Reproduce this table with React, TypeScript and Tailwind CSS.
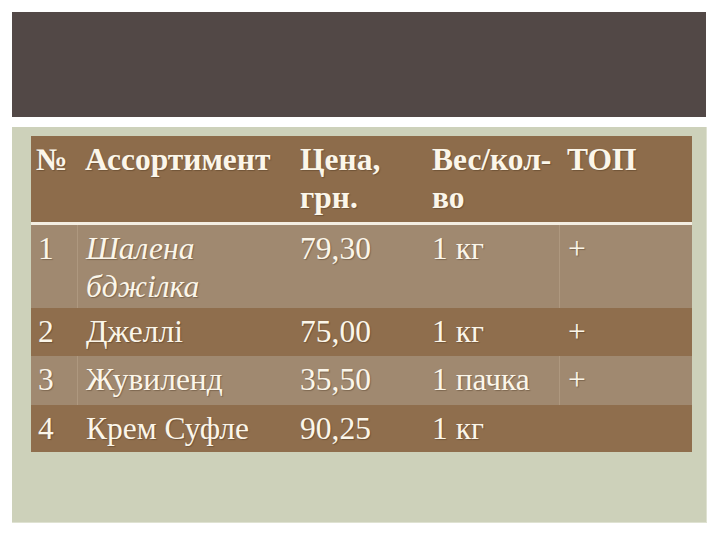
import React from "react";

type Row = { n: string; name: string[]; italic: boolean; price: string; w: string; top: string; light: boolean; h: string };

const rows: Row[] = [
  { n: "1", name: ["Шалена", "бджілка"], italic: true, price: "79,30", w: "1 кг", top: "+", light: true, h: "h-[83px]" },
  { n: "2", name: ["Джеллі"], italic: false, price: "75,00", w: "1 кг", top: "+", light: false, h: "h-[48px]" },
  { n: "3", name: ["Жувиленд"], italic: false, price: "35,50", w: "1 пачка", top: "+", light: true, h: "h-[49px]" },
  { n: "4", name: ["Крем Суфле"], italic: false, price: "90,25", w: "1 кг", top: "", light: false, h: "h-[47px]" },
];

export default function App() {
  return (
    <div className="w-[720px] h-[540px] bg-white p-[12px] flex flex-col gap-[10px] font-['Liberation_Serif',serif]">
      <div className="h-[105px] w-[694px] bg-[#524846]" />
      <div className="h-[396px] w-[695px] bg-[#cdd1ba] pt-[9px] pl-[19px] border-r border-b border-[#dfe2d2]">
        <div className="w-[661px] flex flex-col text-[31.5px] leading-[38px] text-[#fbf6ea] [text-shadow:1px_1px_1px_rgba(60,40,20,0.35)]">
          <div className="flex h-[89px] bg-[#8d6c4b] font-bold border-b-[3px] border-[#f4eee2] whitespace-nowrap">
            <div className="w-[46px] pl-[5px] pt-[5px]">№</div>
            <div className="w-[215px] pl-[8px] pt-[5px]">Ассортимент</div>
            <div className="w-[133px] pl-[8px] pt-[5px]">Цена,<br />грн.</div>
            <div className="w-[134px] pl-[7px] pt-[5px]">Вес/кол-<br />во</div>
            <div className="w-[133px] pl-[8px] pt-[5px]">ТОП</div>
          </div>
          {rows.map((r) => (
            <div key={r.n} className={`flex whitespace-nowrap ${r.h} ${r.light ? "bg-[#a08970]" : "bg-[#8f6e4d]"}`}>
              <div className="w-[46px] pl-[7px] pt-[5px]">{r.n}</div>
              <div className={`w-[215px] pl-[8px] pt-[5px] border-l ${r.light ? "border-[#ae987f]" : "border-transparent"} ${r.italic ? "italic" : ""}`}>
                {r.name.map((t) => (
                  <div key={t}>{t}</div>
                ))}
              </div>
              <div className="w-[133px] pl-[8px] pt-[5px]">{r.price}</div>
              <div className="w-[134px] pl-[7px] pt-[5px]">{r.w}</div>
              <div className={`w-[133px] pl-[8px] pt-[5px] font-light border-l ${r.light ? "border-[#ae987f]" : "border-transparent"}`}>{r.top}</div>
            </div>
          ))}
        </div>
      </div>
    </div>
  );
}
